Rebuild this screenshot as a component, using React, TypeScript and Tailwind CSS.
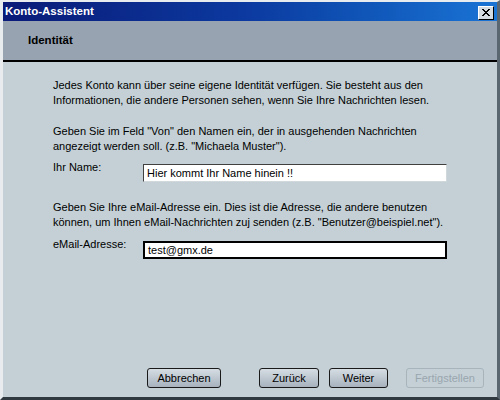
import React from 'react';

const font = { fontFamily: '"Liberation Sans", Arial, sans-serif' };

const Btn: React.FC<{ label: string; w: string; disabled?: boolean }> = ({ label, w, disabled }) => (
  <button
    className={`${w} h-[20px] rounded-[3px] text-[11px] leading-none ${
      disabled
        ? 'border border-[#a8b4bc] bg-[#c4d0d6] text-[#9aa6ae]'
        : 'border border-[#1a1a1a] bg-gradient-to-b from-[#d6dde3] to-[#a7b2be] text-black'
    }`}
  >
    {label}
  </button>
);

export default function App() {
  return (
    <div className="w-[500px] h-[400px] bg-[#c4d0d6] flex flex-col border-l-[3px] border-t-[2px] border-l-[#e8ecee] border-t-[#e8ecee] border-r-[3px] border-r-[#5a6670] border-b-[3px] border-b-[#303840]" style={font}>
      <div className="h-[19px] flex items-center justify-between pl-[2px] pr-[3px] bg-gradient-to-r from-[#0a1a78] via-[#0c3aa0] to-[#1a74d4]">
        <span className="text-white font-bold text-[11.5px]">Konto-Assistent</span>
        <span className="w-[16px] h-[14px] mt-[2px] bg-[#d4dce2] border border-t-white border-l-white border-r-black border-b-black flex items-center justify-center">
          <svg width="8" height="7" viewBox="0 0 8 7">
            <path d="M0 0L7 7M1 0L8 7M7 0L0 7M8 0L1 7" stroke="black" strokeWidth="1" />
          </svg>
        </span>
      </div>
      <div className="h-[41px] bg-[#97a3b1] flex items-center pl-[25px] border-b-2 border-b-black">
        <span className="font-bold text-[11.5px] text-black">Identität</span>
      </div>
      <div className="flex-1 flex flex-col pl-[50px] pr-[10px] pt-[16px] text-[11px] leading-[15px] text-black">
        <p>
          Jedes Konto kann über seine eigene Identität verfügen. Sie besteht aus den<br />
          Informationen, die andere Personen sehen, wenn Sie Ihre Nachrichten lesen.
        </p>
        <p className="mt-[16px]">
          Geben Sie im Feld "Von" den Namen ein, der in ausgehenden Nachrichten<br />
          angezeigt werden soll. (z.B. "Michaela Muster").
        </p>
        <div className="flex items-start mt-[10px]">
          <span className="w-[90px] -mt-[4px]">Ihr Name:</span>
          <div className="w-[304px] h-[18px] bg-white border border-t-[#404040] border-l-[#404040] border-r-[#d0d8dc] border-b-[#d0d8dc] pl-[3px] flex items-center">
            Hier kommt Ihr Name hinein !!
          </div>
        </div>
        <p className="mt-[18px]">
          Geben Sie Ihre eMail-Adresse ein. Dies ist die Adresse, die andere benutzen<br />
          können, um Ihnen eMail-Nachrichten zuj senden (z.B. "Benutzer@beispiel.net").
        </p>
        <div className="flex items-start mt-[11px]">
          <span className="w-[90px] -mt-[4px]">eMail-Adresse:</span>
          <div className="w-[304px] h-[18px] bg-white border-2 border-black pl-[3px] flex items-center">
            test@gmx.de
          </div>
        </div>
        <div className="mt-auto mb-[9px] flex pl-[94px]">
          <Btn label="Abbrechen" w="w-[74px]" />
          <div className="ml-[38px] flex gap-[10px]">
            <Btn label="Zurück" w="w-[60px]" />
            <Btn label="Weiter" w="w-[59px]" />
          </div>
          <div className="ml-[18px]">
            <Btn label="Fertigstellen" w="w-[78px]" disabled />
          </div>
        </div>
      </div>
    </div>
  );
}
